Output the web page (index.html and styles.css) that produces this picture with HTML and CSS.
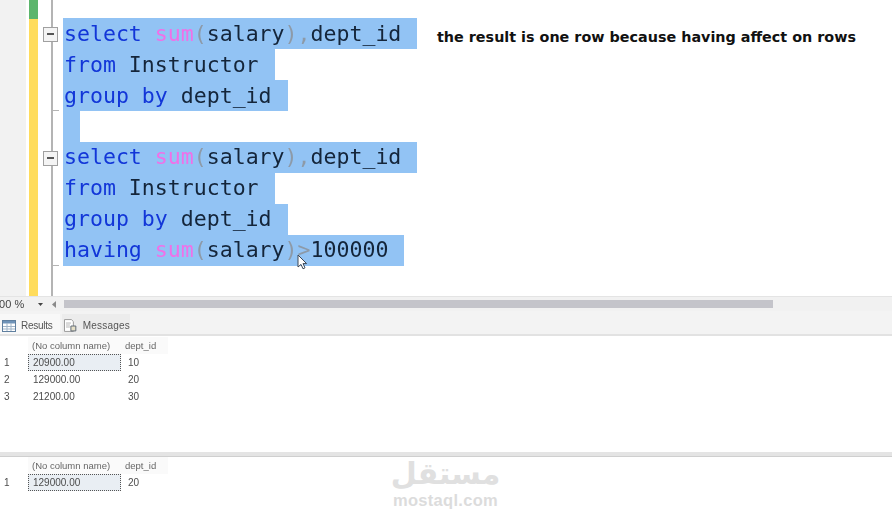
FILE: index.html
```html
<!DOCTYPE html>
<html lang="en">
<head>
<meta charset="utf-8">
<title>Query results</title>
<link rel="stylesheet" href="styles.css">
</head>
<body>
<div class="page">
  <section class="editor">
    <div class="gutter"></div>
    <div class="changebar"><div class="saved"></div></div>
    <div class="outline">
      <div class="fold-block first">
        <span class="fold"></span>
      </div>
      <div class="fold-block second">
        <span class="fold"></span>
      </div>
    </div>
    <div class="code">
      <div class="line"><span class="sel"><b class="kw">select</b> <b class="fn">sum</b><b class="op">(</b>salary<b class="op">),</b>dept_id</span></div>
      <div class="line"><span class="sel"><b class="kw">from</b> Instructor</span></div>
      <div class="line"><span class="sel"><b class="kw">group by</b> dept_id</span></div>
      <div class="line"><span class="sel">&#8203;</span></div>
      <div class="line lower"><span class="sel"><b class="kw">select</b> <b class="fn">sum</b><b class="op">(</b>salary<b class="op">),</b>dept_id</span></div>
      <div class="line lower"><span class="sel"><b class="kw">from</b> Instructor</span></div>
      <div class="line lower"><span class="sel"><b class="kw">group by</b> dept_id</span></div>
      <div class="line lower"><span class="sel"><b class="kw">having</b> <b class="fn">sum</b><b class="op">(</b>salary<b class="op">)&gt;</b>100000</span></div>
    </div>
    <p class="note">the result is one row because having affect on rows</p>
    <svg class="cursor" width="10" height="16" viewBox="0 0 10 16"><path d="M1 1v12l3-2.600 2 4.400 2-1-2-4.200h3.600z" fill="#fff" stroke="#3c4654" stroke-width="1"/></svg>
  </section>

  <div class="toolbar">
    <span class="zoom">100 %</span>
    <svg class="drop" width="5" height="3" viewBox="0 0 5 3"><path d="M0 0h5L2.500 3z" fill="#444"/></svg>
    <svg class="left" width="4" height="7" viewBox="0 0 4 7"><path d="M4 0v7L0 3.500z" fill="#8a8a8a"/></svg>
    <div class="track"><div class="thumb"></div></div>
  </div>

  <div class="tabs">
    <div class="tab active">
      <svg width="14" height="12" viewBox="0 0 14 12"><rect x=".5" y=".5" width="13" height="11" fill="#fff" stroke="#5f7f9f"/><path d="M1 1h12v2.500H1z" fill="#6f93b8"/><path d="M1 6.500h12M1 9h12M5 3v8M9 3v8" stroke="#9fb4c8"/></svg>
      <span class="tab-results">Results</span>
    </div>
    <div class="tab">
      <svg class="msg-icon" width="14" height="14" viewBox="0 0 14 14"><path d="M1.500.5h7l2 2v10h-9z" fill="#fff" stroke="#9a9a9a"/><path d="M8 7h5v5H8z" fill="#e6e0c8" stroke="#606a76"/><path d="M3 4h5M3 6h4M3 8h4" stroke="#b5b5b5"/></svg>
      <span class="tab-messages">Messages</span>
    </div>
  </div>

  <div class="grid-one">
    <div class="grid">
      <div class="corner"></div><div class="head">(No column name)</div><div class="head id">dept_id</div>
      <div class="num">1</div><div class="cell focus">20900.00</div><div class="cell id">10</div>
      <div class="num">2</div><div class="cell">129000.00</div><div class="cell id">20</div>
      <div class="num">3</div><div class="cell">21200.00</div><div class="cell id">30</div>
    </div>
  </div>

  <div class="divider"></div>

  <div class="grid">
    <div class="corner"></div><div class="head">(No column name)</div><div class="head id">dept_id</div>
    <div class="num">1</div><div class="cell focus">129000.00</div><div class="cell id">20</div>
  </div>

  <div class="mark" lang="ar">
    <span class="mark-ar">مستقل</span>
    <span class="mark-en">mostaql.com</span>
  </div>
</div>
</body>
</html>
```
FILE: styles.css
```css
* { box-sizing: border-box; }
html, body { margin: 0; padding: 0; background: #fff; }
.page {
  position: relative;
  width: 892px;
  height: 520px;
  overflow: hidden;
  font-family: "Liberation Sans", Arial, sans-serif;
  color: #3a3a3a;
}

/* editor */
.editor {
  position: relative;
  display: flex;
  height: 296px;
  background: #fff;
}
.gutter { width: 26px; background: #f2f2f2; }
.changebar { width: 9px; margin-left: 3px; background: #ffdc5c; }
.saved { height: 19px; background: #5cb56c; }
.outline {
  position: relative;
  width: 25px;
  display: flex;
  flex-direction: column;
  padding-top: 27px;
}
.outline::before {
  content: "";
  position: absolute;
  left: 13px;
  top: 0;
  bottom: 0;
  width: 2px;
  background: #b4b4b4;
}
.fold-block { position: relative; height: 124px; }
.fold-block::after {
  content: "";
  position: absolute;
  left: 14px;
  width: 7px;
  height: 1px;
  background: #b4b4b4;
}
.fold-block.first::after { top: 83px; }
.fold-block.second::after { top: 114px; }
.fold {
  position: relative;
  z-index: 1;
  display: block;
  width: 15px;
  height: 15px;
  margin-left: 5px;
  background: #f4f4f4;
  border: 1px solid #a0a0a0;
}
.fold::after {
  content: "";
  position: absolute;
  left: 3px;
  top: 5px;
  width: 7px;
  height: 2px;
  background: #555;
}
.code {
  padding-top: 18px;
  font: 21.55px/31px "DejaVu Sans Mono", "Liberation Mono", monospace;
  color: #14253a;
}
.line { height: 31px; white-space: pre; }
.lower { line-height: 29px; }
.sel {
  display: inline-block;
  min-width: 16px;
  height: 31px;
  padding: 0 16px 0 1px;
  background: #92c3f4;
  vertical-align: top;
  filter: blur(.3px);
}
.kw { font-weight: 400; color: #1236d8; }
.fn { font-weight: 400; color: #f070e8; }
.op { font-weight: 400; color: #8d9aa8; }
.note {
  position: absolute;
  left: 437px;
  top: 28px;
  margin: 0;
  font: 700 14.35px/18px "DejaVu Sans", sans-serif;
  color: #111;
  white-space: nowrap;
}
.cursor { position: absolute; left: 297px; top: 254px; }

/* toolbar */
.toolbar {
  display: flex;
  align-items: center;
  height: 15px;
  background: #f1f1f1;
  border-top: 1px solid #e4e4e4;
  overflow: hidden;
}
.zoom {
  width: 40px;
  margin-left: -7px;
  font-size: 11px;
  color: #444;
  filter: blur(.3px);
}
.drop { margin-left: 5px; }
.left { margin-left: 9px; }
.track { flex: 1; margin-left: 8px; height: 8px; }
.thumb { width: 709px; height: 8px; background: #c4c4ca; }

/* tabs */
.tabs {
  display: flex;
  align-items: flex-end;
  height: 25px;
  padding-top: 3px;
  background: #f3f3f3;
  border-bottom: 2px solid #e2e2e2;
  font-size: 10px;
  color: #555;
}
.tab {
  display: flex;
  align-items: center;
  gap: 5px;
  height: 20px;
  padding: 3px 0 0 2px;
  background: #ececec;
}
.tab.active { width: 60px; background: #f8f8f8; }
.tab:not(.active) { margin-left: 2px; width: 68px; gap: 6px; padding-left: 1px; }
.tab span { filter: blur(.3px); }
.tab-results { letter-spacing: -.25px; }
.tab-messages { letter-spacing: .2px; }

/* result grids */
.grid-one { height: 116px; padding-top: 1px; }
.grid {
  display: grid;
  grid-template-columns: 28px 93px 47px;
  grid-auto-rows: 17px;
  font-size: 10px;
  line-height: 17px;
  color: #4c4c4c;
}
.grid > div { filter: blur(.3px); }
.head { background: #fafafa; padding-left: 4px; color: #666; font-size: 9.5px; }
.head.id { padding-left: 4px; }
.num { padding-left: 4px; }
.cell { padding-left: 5px; }
.cell.id { padding-left: 7px; }
.cell.focus {
  background: #e9eef3;
  border: 1px dotted #555;
  line-height: 15px;
  padding-left: 4px;
}
.divider {
  height: 5px;
  background: #e4e4e4;
  border-bottom: 1px solid #cfcfcf;
}

/* watermark */
.mark {
  position: absolute;
  left: 392px;
  top: 455px;
  width: 107px;
  display: flex;
  flex-direction: column;
  align-items: center;
  color: #e0e0e0;
}
.mark-ar { font: 700 30px/38px "DejaVu Sans", sans-serif; }
.mark-en { font: 700 16.5px/15px "Liberation Sans", sans-serif; letter-spacing: .3px; color: #dcdcdc; }
```
